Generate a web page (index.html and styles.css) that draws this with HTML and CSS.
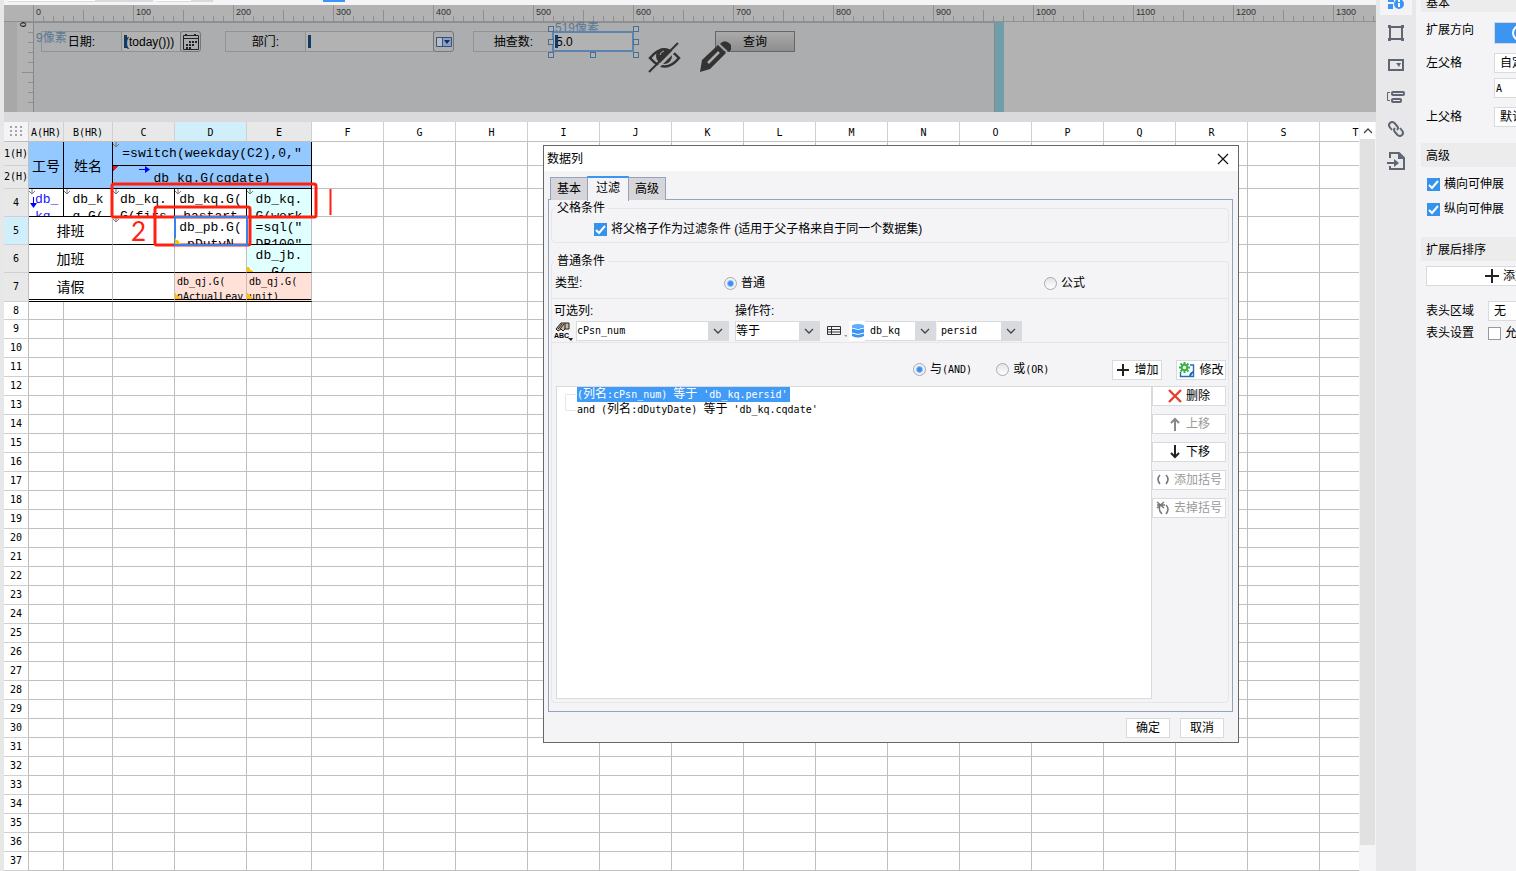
FILE: index.html
```html
<!DOCTYPE html>
<html lang="zh-CN">
<head>
  <meta charset="utf-8">
  <title>数据列</title>
  <link rel="stylesheet" href="styles.css">
</head>
<body>

<div class="app">
  <main class="designer">
    <div class="toolbar-edge">
      <span class="edge-box wide"></span>
      <span class="edge-box"></span>
      <span class="edge-active"></span>
    </div>

    <!-- parameter pane -->
    <section class="param-pane">
      <div class="ruler-top">
        <div class="ticks" id="rulerLabels"></div>
      </div>
      <div class="param-body">
        <div class="ruler-left"><span>0</span></div>
        <div class="canvas">
          <span class="hint hint-left">9像素</span>
          <label class="widget w-label date-label" for="dateInput">日期:</label>
          <input class="widget date-input" id="dateInput" type="text" value="(today()))">
          <button class="widget pick date-pick" aria-label="日期">
            <svg width="18" height="18" viewBox="0 0 18 18"><path d="M1.500 2.500h15v14h-15zM1.500 5.500h15" fill="none" stroke="#222"/><path d="M4 1v2M13 1v2" stroke="#222" stroke-width="2"/><path d="M7 9h8M4 12h8M4 15h6" stroke="#222" stroke-width="2" stroke-dasharray="2 1"/></svg>
          </button>
          <label class="widget w-label dept-label" for="deptInput">部门:</label>
          <input class="widget dept-input" id="deptInput" type="text">
          <button class="widget pick dept-pick" aria-label="部门">
            <svg width="18" height="18" viewBox="0 0 18 18"><path d="M1.500 4.500h15v9h-15z" fill="#b8bdc6" stroke="#35517f"/><path d="M8 5h8v8H8z" fill="#8ba0c4"/><path d="M7.500 5v8" stroke="#35517f"/><path d="M9 7h6l-3 4z" fill="#142c6c"/></svg>
          </button>
          <label class="widget w-label count-label" for="countInput">抽查数:</label>
          <span class="hint hint-top">519像素</span>
          <input class="widget count-input" id="countInput" type="text" value="5.0">
          <i class="caret caret-date"></i><i class="caret caret-dept"></i><i class="caret caret-count"></i>
          <i class="handle h-nw"></i><i class="handle h-w"></i><i class="handle h-sw"></i><i class="handle h-s"></i>
          <i class="handle h-ne"></i><i class="handle h-e"></i><i class="handle h-se"></i>
          <button class="widget query">查询</button>
          <svg class="eye" width="34" height="32" viewBox="0 0 34 32"><path d="M2 16Q16-1 31 16Q17 33 2 16z" fill="none" stroke="#333" stroke-width="2.600"/><circle cx="16" cy="14" r="8" fill="#333"/><path d="M12 13a5 5 0 0 1 4-4" stroke="#abadaf" fill="none"/><path d="M4 31L33 2" stroke="#abadaf" stroke-width="3"/><path d="M1 30L30 1" stroke="#333" stroke-width="2"/></svg>
          <svg class="pencil" width="31" height="31" viewBox="0 0 31 31"><path d="M0 31l2-12L18 4l8 8-16 16z" fill="#333"/><path d="M20 3q4-5 9-1t0 9z" fill="#333"/><path d="M8 22L19 11" stroke="#abadaf" stroke-width="2.500"/><path d="M19 3l9 9" stroke="#abadaf"/></svg>
        </div>
        <div class="canvas-end"></div>
      </div>
    </section>
    <div class="splitter"></div>

    <!-- report sheet -->
    <section class="sheet-area">
      <div class="sheet-view">
        <table class="sheet" id="sheet">
          <colgroup id="sheetCols"><col class="c-head"><col class="c-a"><col class="c-b"><col class="c-c"><col class="c-d"><col class="c-e"></colgroup>
          <thead>
            <tr id="sheetHead"><th class="corner"><svg width="12" height="10" viewBox="0 0 12 10"><path d="M0 1h12M0 5h12M0 9h12" stroke="#a4a4a4" stroke-width="2" stroke-dasharray="2 3"/></svg></th></tr>
          </thead>
          <tbody id="sheetBody">
            <tr class="r1"><th>1(H)</th><td class="blue title" rowspan="2">工号</td><td class="blue title" rowspan="2">姓名</td>
              <td class="blue down" colspan="3"><div class="clip center">=switch(weekday(C2),0,"</div></td></tr>
            <tr class="r2"><th>2(H)</th><td class="blue mark-red" colspan="3"><div class="clip center low">db_kq.G(cqdate)</div></td></tr>
            <tr class="r4"><th>4</th><td class="ink down expand"><div class="clip link">db_<br>kq.</div></td><td class="ink down"><div class="clip center">db_k<br>q.G(</div></td>
              <td class="ink down"><div class="clip">db_kq.<br>G(firs</div></td><td class="ink down"><div class="clip center">db_kq.G(<br>hastart</div></td><td class="ink cyan down"><div class="clip center">db_kq.<br>G(work</div></td></tr>
            <tr class="r5"><th class="on">5</th><td class="line title" colspan="2">排班</td><td class="line down"></td><td class="line picked mark-gold"><div class="clip center">db_pb.G(<br>pDutyN</div></td><td class="line cyan"><div class="clip center">=sql("<br>DB100"</div></td></tr>
            <tr class="r6"><th>6</th><td class="line title" colspan="2">加班</td><td class="line"></td><td class="line"></td><td class="line cyan mark-gold"><div class="clip center">db_jb.<br>G(</div></td></tr>
            <tr class="r7"><th>7</th><td class="last title" colspan="2">请假</td><td class="last"></td><td class="last pink mark-gold"><div class="clip small">db_qj.G(<br>nActualLeav</div></td><td class="last pink mark-gold"><div class="clip small">db_qj.G(<br>unit)</div></td></tr>
          </tbody>
        </table>
      </div>
      <div class="scrollbar">
        <button class="scroll-up" aria-label="向上"><svg width="10" height="6" viewBox="0 0 10 6"><path d="M1 5l4-4 4 4" fill="none" stroke="#444" stroke-width="1.300"/></svg></button>
        <div class="thumb"></div>
      </div>
    </section>
  </main>

  <nav class="icon-bar">
    <button class="active" aria-label="单元格属性"><svg width="16" height="16" viewBox="0 0 16 16"><path d="M0 0h6v2H0zM0 4h5v5H0z" fill="#3c95f2"/><circle cx="11" cy="4" r="5" fill="#3c95f2"/><path d="M11 3v4M11 0v2" stroke="#fff" stroke-width="2"/></svg></button>
    <button aria-label="单元格元素"><svg width="16" height="16" viewBox="0 0 16 16"><path d="M2 2h12v12H2z" fill="none" stroke="#5f6573" stroke-width="2"/><path d="M0 0h3v3H0zM13 0h3v3h-3zM0 13h3v3H0zM13 13h3v3h-3z" fill="#5f6573"/></svg></button>
    <button aria-label="控件设置"><svg width="16" height="12" viewBox="0 0 16 12"><path d="M1 1h14v10H1z" fill="none" stroke="#5f6573" stroke-width="2"/><path d="M8 4h5l-2 4z" fill="#5f6573"/></svg></button>
    <button aria-label="条件属性"><svg width="18" height="14" viewBox="0 0 18 14"><path d="M3 2.500H.5v8H3" fill="none" stroke="#5f6573"/><rect x="5" y="2" width="12" height="3" rx="1" fill="none" stroke="#5f6573" stroke-width="2"/><rect x="5" y="9" width="9" height="3" rx="1" fill="none" stroke="#5f6573" stroke-width="2"/></svg></button>
    <button aria-label="超级链接"><svg width="16" height="16" viewBox="0 0 16 16" fill="none" stroke="#5f6573" stroke-width="2"><path d="M9 9q2-2 0-4L6.500 2Q4 0 2 2T2 6.500L4 9"/><path d="M7 7q-2 2 0 4l2.500 3q2.500 2 4.500 0t0-4.500L12 7"/></svg></button>
    <button aria-label="导出"><svg width="18" height="18" viewBox="0 0 18 18"><path d="M3 6V1h9l5 5v11H3v-3" fill="none" stroke="#5f6573" stroke-width="2"/><path d="M11 1v6h6z" fill="#5f6573"/><path d="M0 11h8" stroke="#5f6573" stroke-width="2"/><path d="M7 7l5 4-5 4z" fill="#5f6573"/></svg></button>
  </nav>

  <aside class="props">
    <h3 class="first">基本</h3>
    <div class="prop-row r-dir"><span>扩展方向</span><button class="dir-btn" aria-label="横向"><svg width="16" height="18" viewBox="0 0 16 18"><circle cx="9" cy="9" r="7" fill="none" stroke="#fff" stroke-width="2"/></svg></button></div>
    <div class="prop-row r-left"><label for="leftParent">左父格</label><select id="leftParent"><option>自定义</option></select></div>
    <div class="prop-row r-cell"><input class="mono" type="text" value="A" aria-label="左父格单元格"></div>
    <div class="prop-row r-top"><label for="topParent">上父格</label><select id="topParent"><option>默认</option></select></div>
    <h3>高级</h3>
    <div class="checks">
      <label><input type="checkbox" checked>横向可伸展</label>
      <label><input type="checkbox" checked>纵向可伸展</label>
    </div>
    <h3>扩展后排序</h3>
    <button class="add-sort"><svg width="14" height="14" viewBox="0 0 14 14"><path d="M7 0v14M0 7h14" stroke="#222" stroke-width="2"/></svg>添加</button>
    <div class="prop-row r-area"><label for="headArea">表头区域</label><select id="headArea"><option>无</option></select></div>
    <div class="prop-row r-set"><span>表头设置</span><label><input type="checkbox">允许</label></div>
  </aside>
</div>

<!-- marks over the sheet -->
<svg class="marks" width="340" height="70" viewBox="0 0 340 70" fill="none" stroke="#ff2010" stroke-width="3">
  <rect x="112" y="4" width="204" height="33" rx="2"/>
  <rect x="155" y="27" width="95" height="38" rx="2"/>
  <path d="M330.500 9v26" stroke-width="2"/>
  <text class="mark-num" x="131" y="61">2</text>
</svg>

<!-- data column dialog -->
<div class="dialog" role="dialog" aria-label="数据列">
  <header class="dialog-title">
    <span>数据列</span>
    <button aria-label="关闭"><svg width="12" height="12" viewBox="0 0 12 12"><path d="M1 1l10 10M11 1L1 11" stroke="#111" stroke-width="1.200"/></svg></button>
  </header>
  <div class="tabs">
    <button>基本</button><button class="current">过滤</button><button>高级</button>
  </div>
  <div class="tab-pane">
    <fieldset class="parent-box">
      <legend>父格条件</legend>
      <label><input type="checkbox" checked>将父格子作为过滤条件 (适用于父子格来自于同一个数据集)</label>
    </fieldset>
    <fieldset class="cond-box">
      <legend>普通条件</legend>
      <div class="type-row">
        <span>类型:</span>
        <label><input type="radio" name="type" checked>普通</label>
        <label><input type="radio" name="type">公式</label>
      </div>
      <div class="pick-row">
        <div class="field f-col">
          <label for="colSelect">可选列:</label>
          <div class="field-line">
            <svg width="20" height="20" viewBox="0 0 20 20"><path d="M2 8l5-6h8v6h-4l-2 2-2-2-3 2z" fill="#c9b79d" stroke="#222"/><path d="M4 8l4-5M6 8l4-5" stroke="#222"/><path d="M11 2v6" stroke="#222"/><text class="abc" x="0" y="17">ABC</text><path d="M14 17h5l-2 3z" fill="#222"/></svg>
            <select id="colSelect" class="mono"><option>cPsn_num</option></select>
          </div>
        </div>
        <div class="field f-op">
          <label for="opSelect">操作符:</label>
          <div class="field-line"><select id="opSelect"><option>等于</option></select></div>
        </div>
        <div class="field f-value">
          <div class="field-line">
            <svg class="list-icon" width="20" height="14" viewBox="0 0 20 14"><path d="M.5 2.500h13v8H.5zM.5 5.500h13M.5 8h13M4.500 2.500v8" fill="none" stroke="#333"/><path d="M17 11h3v1l-1 1z" fill="#999"/></svg>
            <span class="db-wrap"><svg width="14" height="14" viewBox="0 0 14 14"><path d="M1 2v10q6 3 12 0V2z" fill="#3c95f2"/><ellipse cx="7" cy="2" rx="6" ry="2" fill="#5badff"/><path d="M1 4q6 3 12 0M1 9q6 3 12 0" stroke="#fff" fill="none"/></svg><select class="mono" aria-label="数据集"><option>db_kq</option></select></span>
            <select class="mono f-persid" aria-label="数据列"><option>persid</option></select>
          </div>
        </div>
      </div>
      <div class="logic-row">
        <label class="and"><input type="radio" name="logic" checked><span>与<span class="mono">(AND)</span></span></label>
        <label class="or"><input type="radio" name="logic"><span>或<span class="mono">(OR)</span></span></label>
        <button class="btn"><svg width="14" height="14" viewBox="0 0 14 14"><path d="M7 1v12M1 7h12" stroke="#222" stroke-width="2"/></svg>增加</button>
        <button class="btn"><svg width="16" height="16" viewBox="0 0 16 16"><path d="M1.500 10v4.500h13V3H11" fill="none" stroke="#1f6fb5" stroke-width="1.400"/><circle cx="5.500" cy="5.500" r="2.800" fill="none" stroke="#35b44a" stroke-width="2"/><path d="M5.500 0v2M5.500 9v2M0 5.500h2M9 5.500h2M1.500 1.500L3 3M8 8l1.500 1.500M9.500 1.500L8 3M3 8L1.500 9.500" stroke="#35b44a" stroke-width="2"/><path d="M10 14l1-3 3-2v2l-2 3z" fill="#1f6fb5"/></svg>修改</button>
      </div>
      <div class="list-row">
        <ul class="cond-list">
          <li class="sel"><span class="mono">(</span>列名<span class="mono">:cPsn_num) </span>等于<span class="mono"> 'db_kq.persid'</span></li>
          <li><span class="mono">and (</span>列名<span class="mono">:dDutyDate) </span>等于<span class="mono"> 'db_kq.cqdate'</span></li>
        </ul>
        <div class="side-buttons">
          <button class="btn"><svg width="14" height="14" viewBox="0 0 14 14"><path d="M1 1l12 12M13 1L1 13" stroke="#e8402f" stroke-width="2.400"/></svg>删除</button>
          <button class="btn" disabled><svg width="14" height="14" viewBox="0 0 14 14"><path d="M7 14V2M3 6l4-4 4 4" fill="none" stroke="#888" stroke-width="2"/></svg>上移</button>
          <button class="btn"><svg width="14" height="14" viewBox="0 0 14 14"><path d="M7 0v12M3 8l4 4 4-4" fill="none" stroke="#222" stroke-width="2"/></svg>下移</button>
          <button class="btn" disabled><svg width="14" height="14" viewBox="0 0 14 14"><path d="M4 2Q0 6 4 11M10 2q4 4 0 9" fill="none" stroke="#777" stroke-width="1.600"/></svg>添加括号</button>
          <button class="btn" disabled><svg width="14" height="14" viewBox="0 0 14 14"><path d="M4 5Q2 9 6 13M10 4q4 4 0 9M1 1l7 6M8 1L1 7M1 4h8" fill="none" stroke="#777" stroke-width="1.500"/></svg>去掉括号</button>
        </div>
      </div>
    </fieldset>
  </div>
  <footer class="dialog-foot">
    <button class="btn">确定</button>
    <button class="btn">取消</button>
  </footer>
</div>

<script src="script.js"></script>
</body>
</html>
```
FILE: styles.css
```css
* {
  box-sizing: border-box;
}

body {
  margin: 0;
  height: 100vh;
  overflow: hidden;
  font-family: "Liberation Sans", "Noto Sans CJK SC", sans-serif;
  font-size: 12px;
  line-height: 16px;
  color: #000;
  background-color: #f4f4f7;
}

button,
input,
select {
  font-family: inherit;
  font-size: 12px;
  line-height: 16px;
  color: #000;
  margin: 0;
  padding: 0;
  border: 1px solid #d9dadd;
  border-radius: 0;
  background-color: #fff;
}

button {
  display: flex;
  align-items: center;
  justify-content: center;
  white-space: nowrap;
}

svg {
  flex: none;
}

.mono {
  font-family: "DejaVu Sans Mono", monospace;
  font-size: 10px;
  white-space: pre;
}

select {
  appearance: none;
  height: 20px;
  padding-right: 20px;
  background: #fff url("data:image/svg+xml,%3Csvg xmlns='http://www.w3.org/2000/svg' width='20' height='20'%3E%3Cpath d='M0 0h20v20H0z' fill='%23d9dadd'/%3E%3Cpath d='M6 8l4 4 4-4' fill='none' stroke='%23444' stroke-width='1.3'/%3E%3C/svg%3E") right center no-repeat;
}

input[type="checkbox"],
input[type="radio"] {
  appearance: none;
  flex: none;
  width: 13px;
  height: 13px;
  border: 1px solid #999;
}

input[type="checkbox"]:checked {
  border-color: #3593ee;
  background: #3593ee url("data:image/svg+xml,%3Csvg xmlns='http://www.w3.org/2000/svg' width='11' height='11'%3E%3Cpath d='M1 6l3 3 6-7' fill='none' stroke='%23fff' stroke-width='2'/%3E%3C/svg%3E") center no-repeat;
}

input[type="radio"] {
  border-color: #aaa;
  border-radius: 50%;
  background: linear-gradient(#e4e4e4, #fff);
}

input[type="radio"]:checked {
  background: radial-gradient(#3c8ef0 0 2px, #eef3fa 4px);
}

label {
  display: flex;
  align-items: center;
}

.app {
  display: grid;
  grid-template-columns: minmax(0, 1fr) 40px 100px;
  height: 100vh;
}

.designer {
  display: flex;
  flex-direction: column;
  min-height: 0;
  border-left: 4px solid #e7e7e7;
  background-color: #fff;
}

.toolbar-edge {
  display: flex;
  height: 5px;
  padding-left: 4px;
  background-color: #f4f4f7;
}

.edge-box {
  width: 56px;
  height: 2px;
  background: linear-gradient(90deg, #fff 60%, #d9dadd 60%);
  border-bottom: 1px solid #d9dadd;
}

.edge-box.wide {
  width: 145px;
  margin-right: 4px;
}

.edge-active {
  width: 22px;
  height: 2px;
  margin-left: 110px;
  background-color: #3c95f2;
}

/* parameter pane */
.param-pane {
  height: 107px;
  background-color: #b2b2b2;
}

.ruler-top {
  height: 17px;
  padding-left: 29px;
  overflow: hidden;
  border-bottom: 1px solid #909090;
  background-color: #b2b2b2;
}

.ticks {
  display: flex;
  height: 16px;
  background-image: linear-gradient(90deg, #8e8e8e 1px, transparent 1px), linear-gradient(90deg, #8e8e8e 1px, transparent 1px), linear-gradient(90deg, #8e8e8e 1px, transparent 1px);
  background-size: 10px 5px, 50px 11px, 100px 16px;
  background-position: left bottom;
  background-repeat: repeat-x;
}

.ticks span {
  flex: 0 0 100px;
  padding-left: 3px;
  font-size: 9px;
  line-height: 14px;
  color: #333;
}

.param-body {
  display: flex;
  height: 90px;
}

.ruler-left {
  width: 30px;
  border-left: 13px solid #a8a8a8;
  border-right: 1px solid #888;
  background-image: linear-gradient(#8e8e8e 1px, transparent 1px), linear-gradient(#8e8e8e 1px, transparent 1px);
  background-size: 5px 10px, 11px 50px;
  background-position: right top;
  background-repeat: repeat-y;
}

.ruler-left span {
  display: block;
  width: 12px;
  font-size: 9px;
  line-height: 12px;
  writing-mode: vertical-rl;
}

.canvas {
  position: relative;
  width: 961px;
  border-top: 1px solid #8c8d90;
  border-right: 1px solid #88898b;
  background-color: #abadaf;
}

.canvas-end {
  width: 9px;
  background-color: #6f9da9;
}

.widget {
  position: absolute;
  top: 8px;
  height: 21px;
  border: 1px solid #919294;
  background-color: #abadaf;
}

.w-label {
  justify-content: center;
  width: 81px;
}

.date-label { left: 7px; }
.date-input { left: 87px; width: 60px; padding-left: 3px; background-color: #b2b2b2; }
.date-pick { left: 146px; }
.dept-label { left: 191px; }
.dept-input { left: 271px; width: 129px; background-color: #b2b2b2; }
.dept-pick { left: 399px; }
.count-label { left: 439px; }
.count-input {
  left: 518px;
  width: 82px;
  padding-left: 2px;
  border: 2px solid #5b84b0;
  background-color: #b2b2b2;
}

.pick {
  width: 21px;
  border: 1px solid #777;
  border-radius: 3px;
}

.query {
  left: 681px;
  width: 80px;
  border: 1px solid #666;
  background: linear-gradient(#aaa, #8e8e8e);
}

.caret {
  position: absolute;
  top: 12px;
  width: 3px;
  height: 13px;
  background-color: #123a63;
}

.caret-date { left: 90px; }
.caret-dept { left: 274px; }
.caret-count { left: 521px; }

.handle {
  position: absolute;
  width: 6px;
  height: 6px;
  border: 1px solid #4a6d92;
  background-color: #b2b2b2;
}

.h-nw, .h-ne { top: 3px; }
.h-w, .h-e { top: 16px; }
.h-sw, .h-s, .h-se { top: 29px; }
.h-nw, .h-w, .h-sw { left: 514px; }
.h-s { left: 556px; }
.h-ne, .h-e, .h-se { left: 599px; }

.hint {
  position: absolute;
  color: #5d7892;
}

.hint-left { left: 2px; top: 7px; z-index: 1; }
.hint-top { left: 521px; top: -3px; }
.eye { position: absolute; left: 614px; top: 19px; }
.pencil { position: absolute; left: 666px; top: 18px; }

.splitter {
  flex: none;
  height: 10px;
  background-color: #dadadc;
}

/* sheet */
.sheet-area {
  display: flex;
  flex: 1;
  min-height: 0;
}

.sheet-view {
  flex: 1;
  min-width: 0;
  overflow: hidden;
}

.sheet {
  width: 1388px;
  table-layout: fixed;
  border-collapse: separate;
  border-spacing: 0;
}

.c-head { width: 25px; }
.c-a { width: 35px; }
.c-b { width: 49px; }
.c-c { width: 62px; }
.c-d { width: 72px; }
.c-e { width: 65px; }

.sheet tr {
  height: 19px;
}

.sheet th {
  padding: 0;
  border-right: 1px solid #d0d0d0;
  border-bottom: 1px solid #d0d0d0;
  font-family: "DejaVu Sans Mono", monospace;
  font-size: 10px;
  font-weight: normal;
  line-height: 12px;
  white-space: nowrap;
}

.sheet tbody th { border-right-color: #bfbfbf; }
.sheet thead tr { height: 20px; }
.sheet thead th { padding-top: 2px; border-bottom-color: #bfbfbf; }
.sheet .used { background-color: #e8e8e8; }
.sheet .corner { background-color: #f4f4f7; }

.sheet td {
  position: relative;
  padding: 0;
  border-right: 1px solid #bfbfbf;
  border-bottom: 1px solid #bfbfbf;
  font-family: "Liberation Mono", "Noto Sans CJK SC", monospace;
  font-size: 13px;
  line-height: 17px;
}

.sheet .r1 { height: 24px; }
.sheet .r2 { height: 23px; }
.sheet .r4, .sheet .r5, .sheet .r6 { height: 28px; }
.sheet .r7 { height: 29px; }
.sheet .r8 { height: 18px; }
.r1 th, .r2 th, .r4 th, .r5 th, .r6 th, .r7 th { background-color: #e8e8e8; }
.sheet th.on { background-color: #d0effa; }
.sheet td.blue { background-color: #93c9ff; border-color: #000; }
.sheet td.ink { border-color: #000; }
.sheet td.line { border-bottom-color: #000; }
.sheet td.last { border-bottom: 3px double #000; }
.sheet td.cyan { background-color: #e0ffff; }
.sheet td.pink { background-color: #ffe1d8; }

.sheet td.title {
  padding-top: 4px;
  font-size: 14px;
  text-align: center;
}

.clip {
  height: 22px;
  padding: 2px 0 0 7px;
  overflow: hidden;
  white-space: nowrap;
}

.r4 .clip, .r5 .clip, .r6 .clip { height: 27px; }
.clip.center { padding-left: 0; text-align: center; }
.clip.low { padding-top: 4px; }
.clip.link { padding-left: 6px; color: #1414ff; }

.clip.small {
  height: 26px;
  padding: 1px 0 0 2px;
  font-family: "DejaVu Sans Mono", monospace;
  font-size: 10px;
  line-height: 15px;
}

.down::before,
.mark-red::before,
.mark-gold::before {
  content: "";
  position: absolute;
  left: 0;
  top: 0;
  width: 6px;
  height: 6px;
}

.down::before {
  background: url("data:image/svg+xml,%3Csvg xmlns='http://www.w3.org/2000/svg' width='6' height='6'%3E%3Cpath d='M3 0v5M0 2l3 3 3-3' fill='none' stroke='%23777'/%3E%3C/svg%3E");
}

.mark-red::before {
  background: linear-gradient(135deg, #e0142c 50%, transparent 50%);
}

.mark-red::after {
  content: "";
  position: absolute;
  left: 26px;
  top: 0;
  width: 11px;
  height: 7px;
  background: url("data:image/svg+xml,%3Csvg xmlns='http://www.w3.org/2000/svg' width='11' height='7'%3E%3Cpath d='M0 3.5h8' stroke='%2300f'/%3E%3Cpath d='M6 0l5 3.500-5 3.500z' fill='%2300f'/%3E%3C/svg%3E");
}

.expand::after {
  content: "";
  position: absolute;
  left: 1px;
  top: 8px;
  width: 7px;
  height: 11px;
  background: url("data:image/svg+xml,%3Csvg xmlns='http://www.w3.org/2000/svg' width='7' height='11'%3E%3Cpath d='M3.5 0v8' stroke='%2300f'/%3E%3Cpath d='M0 6h7l-3.500 5z' fill='%2300f'/%3E%3C/svg%3E");
}

.mark-gold::before {
  top: auto;
  bottom: 0;
  background: linear-gradient(45deg, #ffc000 50%, transparent 50%);
}

.sheet td.picked {
  z-index: 1;
  outline: 2px solid #3c80e8;
  outline-offset: -1px;
}

.scrollbar {
  display: flex;
  flex-direction: column;
  width: 17px;
  padding: 0 1px 26px;
  background-color: #f4f4f7;
}

.scroll-up {
  height: 17px;
  border: 0;
}

.thumb {
  flex: 1;
  background-color: #e1e1e1;
}

.marks {
  position: absolute;
  left: 0;
  top: 180px;
}

.mark-num {
  font-family: Lato, sans-serif;
  font-size: 26px;
  fill: #ff2010;
  stroke-width: 0;
}

/* right side */
.icon-bar {
  display: flex;
  flex-direction: column;
  align-items: center;
  overflow: hidden;
  background-color: #e8e8ea;
}

.icon-bar button {
  flex: none;
  width: 32px;
  height: 32px;
  border: 0;
  background: none;
}

.icon-bar .active {
  height: 15px;
  margin-bottom: 2px;
  align-items: flex-start;
  overflow: hidden;
  background-color: #f4f4f7;
}

.props {
  overflow: hidden;
  padding-left: 5px;
  white-space: nowrap;
}

.props h3 {
  margin: 0;
  padding-left: 5px;
  font-size: 12px;
  font-weight: normal;
  line-height: 26px;
  height: 24px;
  background-color: #ececec;
}

.props .first {
  height: 12px;
  line-height: 6px;
}

.prop-row {
  display: grid;
  grid-template-columns: 68px 100px;
  align-items: center;
  height: 20px;
  padding-left: 5px;
}

.prop-row select,
.prop-row input[type="text"] {
  height: 20px;
  padding-left: 5px;
}

.prop-row input[type="text"] {
  grid-column: 2;
  padding-left: 1px;
}

.r-dir { align-items: start; margin-top: 10px; height: 24px; }
.r-left { margin-top: 7px; }
.r-cell { margin-top: 5px; }
.r-top { margin: 9px 0 16px; }

.dir-btn {
  width: 60px;
  height: 22px;
  justify-content: flex-start;
  padding-left: 16px;
  background-color: #3c95f2;
}

.checks {
  display: flex;
  flex-direction: column;
  gap: 9px;
  padding: 9px 0 20px 6px;
}

.checks label,
.r-set label {
  gap: 4px;
}

.add-sort {
  width: 160px;
  height: 20px;
  margin: 5px 0 0 5px;
  gap: 4px;
}

.r-area, .r-set {
  grid-template-columns: 62px 100px;
}

.r-area { margin-top: 15px; }
.r-set { margin-top: 2px; }

/* dialog */
.dialog {
  position: absolute;
  left: 543px;
  top: 145px;
  width: 696px;
  border: 1px solid #666;
  background-color: #f4f4f7;
}

.dialog-title {
  display: flex;
  justify-content: space-between;
  align-items: center;
  height: 25px;
  padding: 0 9px 0 3px;
  background-color: #fff;
}

.dialog-title button {
  border: 0;
}

.tabs {
  display: flex;
  align-items: flex-end;
  height: 29px;
  padding-left: 6px;
}

.tabs button {
  width: 38px;
  height: 23px;
  border: 1px solid #93a3bd;
  border-bottom: 0;
  background-color: #d6d6da;
}

.tabs .current {
  width: 42px;
  height: 25px;
  margin: 0 -1px -1px;
  padding-bottom: 3px;
  border-top: 2px solid #3c95f2;
  background-color: #f4f4f7;
  position: relative;
}

.tab-pane {
  margin: -1px 5px 0 4px;
  padding: 0 3px 8px 2px;
  border: 1px solid #93a3bd;
}

fieldset {
  min-width: 0;
  margin: 0;
  padding: 0;
  border: 1px solid #e6e6e9;
  border-radius: 4px;
}

legend {
  margin-left: 2px;
  padding: 0 3px;
}

.parent-box {
  height: 43px;
  padding: 5px 0 0 42px;
}

.parent-box legend { margin-left: -40px; }

.parent-box label {
  gap: 4px;
}

.cond-box {
  margin-top: 10px;
}

.type-row {
  display: grid;
  grid-template-columns: 169px 320px 1fr;
  height: 30px;
  padding: 6px 0 0 3px;
  border-bottom: 1px solid #e6e6e9;
}

.type-row label {
  gap: 4px;
  height: 16px;
}

.pick-row {
  display: flex;
  align-items: flex-end;
  height: 44px;
  padding: 0 0 1px 2px;
  border-bottom: 1px solid #e6e6e9;
}

.field > label {
  height: 20px;
}

.field-line {
  display: flex;
  align-items: center;
}

.f-col select { width: 153px; margin-left: 2px; }
.f-op { margin-left: 6px; }
.f-op select { width: 85px; }
.f-value { margin-left: 7px; }
.f-value select { border-left: 0; }
.f-value .f-persid { width: 85px; margin-left: 1px; padding-left: 4px; }
.list-icon { margin-right: 2px; }

.db-wrap {
  display: flex;
  align-items: center;
  height: 20px;
  padding-left: 2px;
  background-color: #fff;
}

.f-value .db-wrap select { width: 71px; padding-left: 5px; }

.abc {
  font-family: "Liberation Sans", sans-serif;
  font-size: 7px;
  font-weight: bold;
}

.logic-row {
  display: flex;
  align-items: center;
  height: 43px;
  padding: 10px 2px 0 0;
}

.logic-row label { gap: 4px; }
.logic-row .and { margin-left: 361px; }
.logic-row .or { margin: 0 auto 0 24px; }

.btn {
  height: 20px;
  padding: 0 3px;
  gap: 5px;
}

.logic-row .btn {
  width: 50px;
  margin-left: 14px;
}

.btn:disabled { color: #999; }

.list-row {
  display: flex;
  padding: 0 2px 3px 4px;
}

.cond-list {
  flex: 1;
  height: 313px;
  margin: 0;
  padding: 0 0 0 20px;
  border: 1px solid #d9dadd;
  list-style: none;
  background: #fff url("data:image/svg+xml,%3Csvg xmlns='http://www.w3.org/2000/svg' width='11' height='17'%3E%3Cpath d='M11 .5H.5v16H11' fill='none' stroke='%23e6e6e6'/%3E%3C/svg%3E") 8px 7px no-repeat;
}

.cond-list li {
  width: max-content;
  height: 15px;
  line-height: 15px;
}

.cond-list .sel {
  padding-right: 2px;
  color: #fff;
  background-color: #3f9bf7;
}

.side-buttons {
  display: flex;
  flex-direction: column;
  gap: 8px;
  width: 74px;
}

.side-buttons .btn { gap: 4px; }

.dialog-foot {
  display: flex;
  justify-content: flex-end;
  gap: 10px;
  padding: 6px 14px 4px;
}

.dialog-foot .btn { width: 44px; }
```
FILE: script.js
```javascript
const letters = 'ABCDEFGHIJKLMNOPQRST'.split('');
const head = document.getElementById('sheetHead');
const cols = document.getElementById('sheetCols');
const body = document.getElementById('sheetBody');
const ruler = document.getElementById('rulerLabels');

// column headings, A to E belong to the report
letters.forEach(function (letter, index) {
  const th = document.createElement('th');
  th.textContent = index < 2 ? letter + '(HR)' : letter;
  if (index < 5) {
    th.className = letter === 'D' ? 'on' : 'used';
  } else {
    cols.appendChild(document.createElement('col'));
  }
  head.appendChild(th);
});

// empty cells right of the report
Array.from(body.rows).forEach(function (row) {
  for (let i = 5; i < letters.length; i++) {
    row.insertCell();
  }
});

// empty rows below the report
for (let n = 8; n <= 37; n++) {
  const row = body.insertRow();
  row.className = 'r' + n;
  const th = document.createElement('th');
  th.textContent = n;
  row.appendChild(th);
  letters.forEach(function () {
    row.insertCell();
  });
}

// ruler numbers
for (let x = 0; x <= 1300; x += 100) {
  const label = document.createElement('span');
  label.textContent = x;
  ruler.appendChild(label);
}
```
